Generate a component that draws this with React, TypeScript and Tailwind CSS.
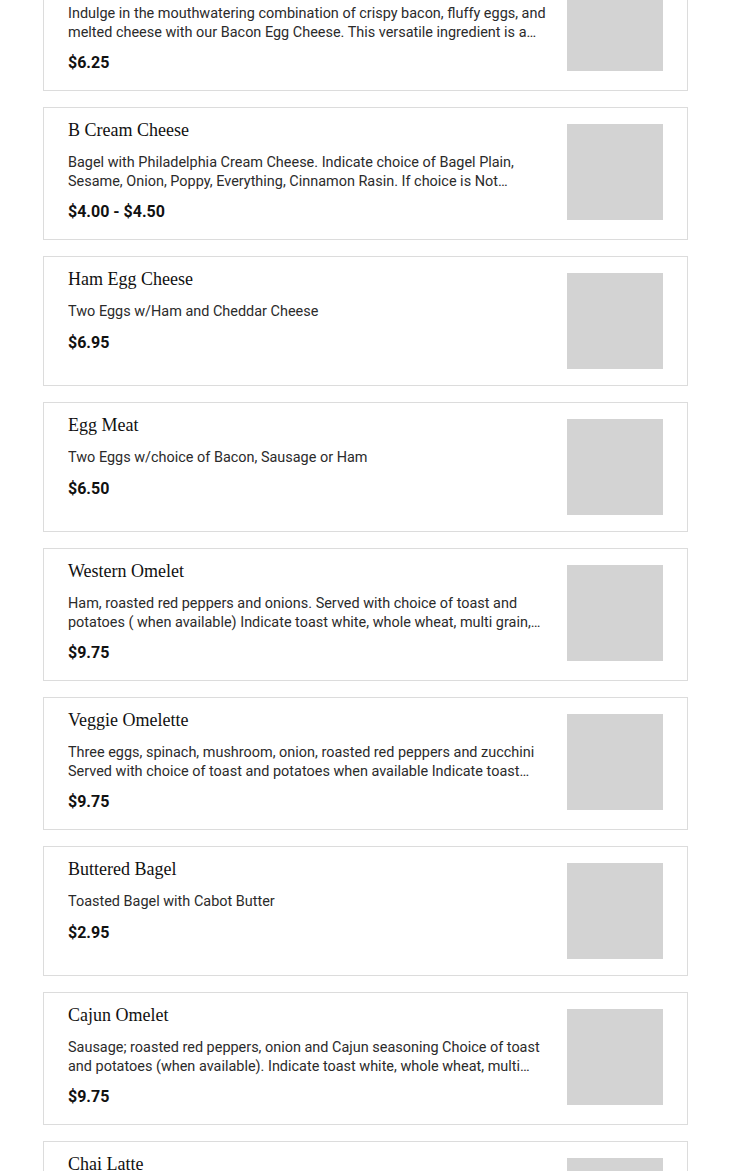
import React from "react";

type Item = { title: string; desc: string; price: string };

const items: Item[] = [
  {
    title: "Bacon Egg Cheese",
    desc: "Indulge in the mouthwatering combination of crispy bacon, fluffy eggs, and melted cheese with our Bacon Egg Cheese. This versatile ingredient is a perfect start to your morning.",
    price: "$6.25",
  },
  {
    title: "B Cream Cheese",
    desc: "Bagel with Philadelphia Cream Cheese. Indicate choice of Bagel Plain, Sesame, Onion, Poppy, Everything, Cinnamon Rasin. If choice is Not available we will substitute.",
    price: "$4.00 - $4.50",
  },
  { title: "Ham Egg Cheese", desc: "Two Eggs w/Ham and Cheddar Cheese", price: "$6.95" },
  { title: "Egg Meat", desc: "Two Eggs w/choice of Bacon, Sausage or Ham", price: "$6.50" },
  {
    title: "Western Omelet",
    desc: "Ham, roasted red peppers and onions. Served with choice of toast and potatoes ( when available) Indicate toast white, whole wheat, multi grain, rye",
    price: "$9.75",
  },
  {
    title: "Veggie Omelette",
    desc: "Three eggs, spinach, mushroom, onion, roasted red peppers and zucchini Served with choice of toast and potatoes when available Indicate toast white, whole wheat, multi grain, rye",
    price: "$9.75",
  },
  { title: "Buttered Bagel", desc: "Toasted Bagel with Cabot Butter", price: "$2.95" },
  {
    title: "Cajun Omelet",
    desc: "Sausage; roasted red peppers, onion and Cajun seasoning Choice of toast and potatoes (when available). Indicate toast white, whole wheat, multi grain, rye",
    price: "$9.75",
  },
  { title: "Chai Latte", desc: "Spiced chai tea with steamed milk", price: "$4.50" },
];

function Card({ item }: { item: Item }) {
  return (
    <div className="flex items-start gap-4 border border-[#dcdcdc] bg-white px-6 py-4">
      <div className="-mt-[6px] min-w-0 flex-1">
        <h3 className="text-[18px] leading-[24px] text-[#111] [font-family:'Liberation_Serif',serif]">
          {item.title}
        </h3>
        <p className="mt-[12px] line-clamp-2 text-[14.45px] leading-[18.5px] text-[#2b2b2b] [font-family:Roboto,sans-serif]">
          {item.desc}
        </p>
        <div className="mt-[10px] text-[16px] font-bold leading-[22px] text-[#111] [font-family:Roboto,sans-serif]">
          {item.price}
        </div>
      </div>
      <div className="h-24 w-24 shrink-0 bg-[#d3d3d3]" />
    </div>
  );
}

export default function App() {
  return (
    <div className="min-h-screen bg-white">
      <div className="ml-[43px] -mt-[42px] flex w-[645px] flex-col gap-4">
        {items.map((it) => (
          <Card key={it.title} item={it} />
        ))}
      </div>
    </div>
  );
}
